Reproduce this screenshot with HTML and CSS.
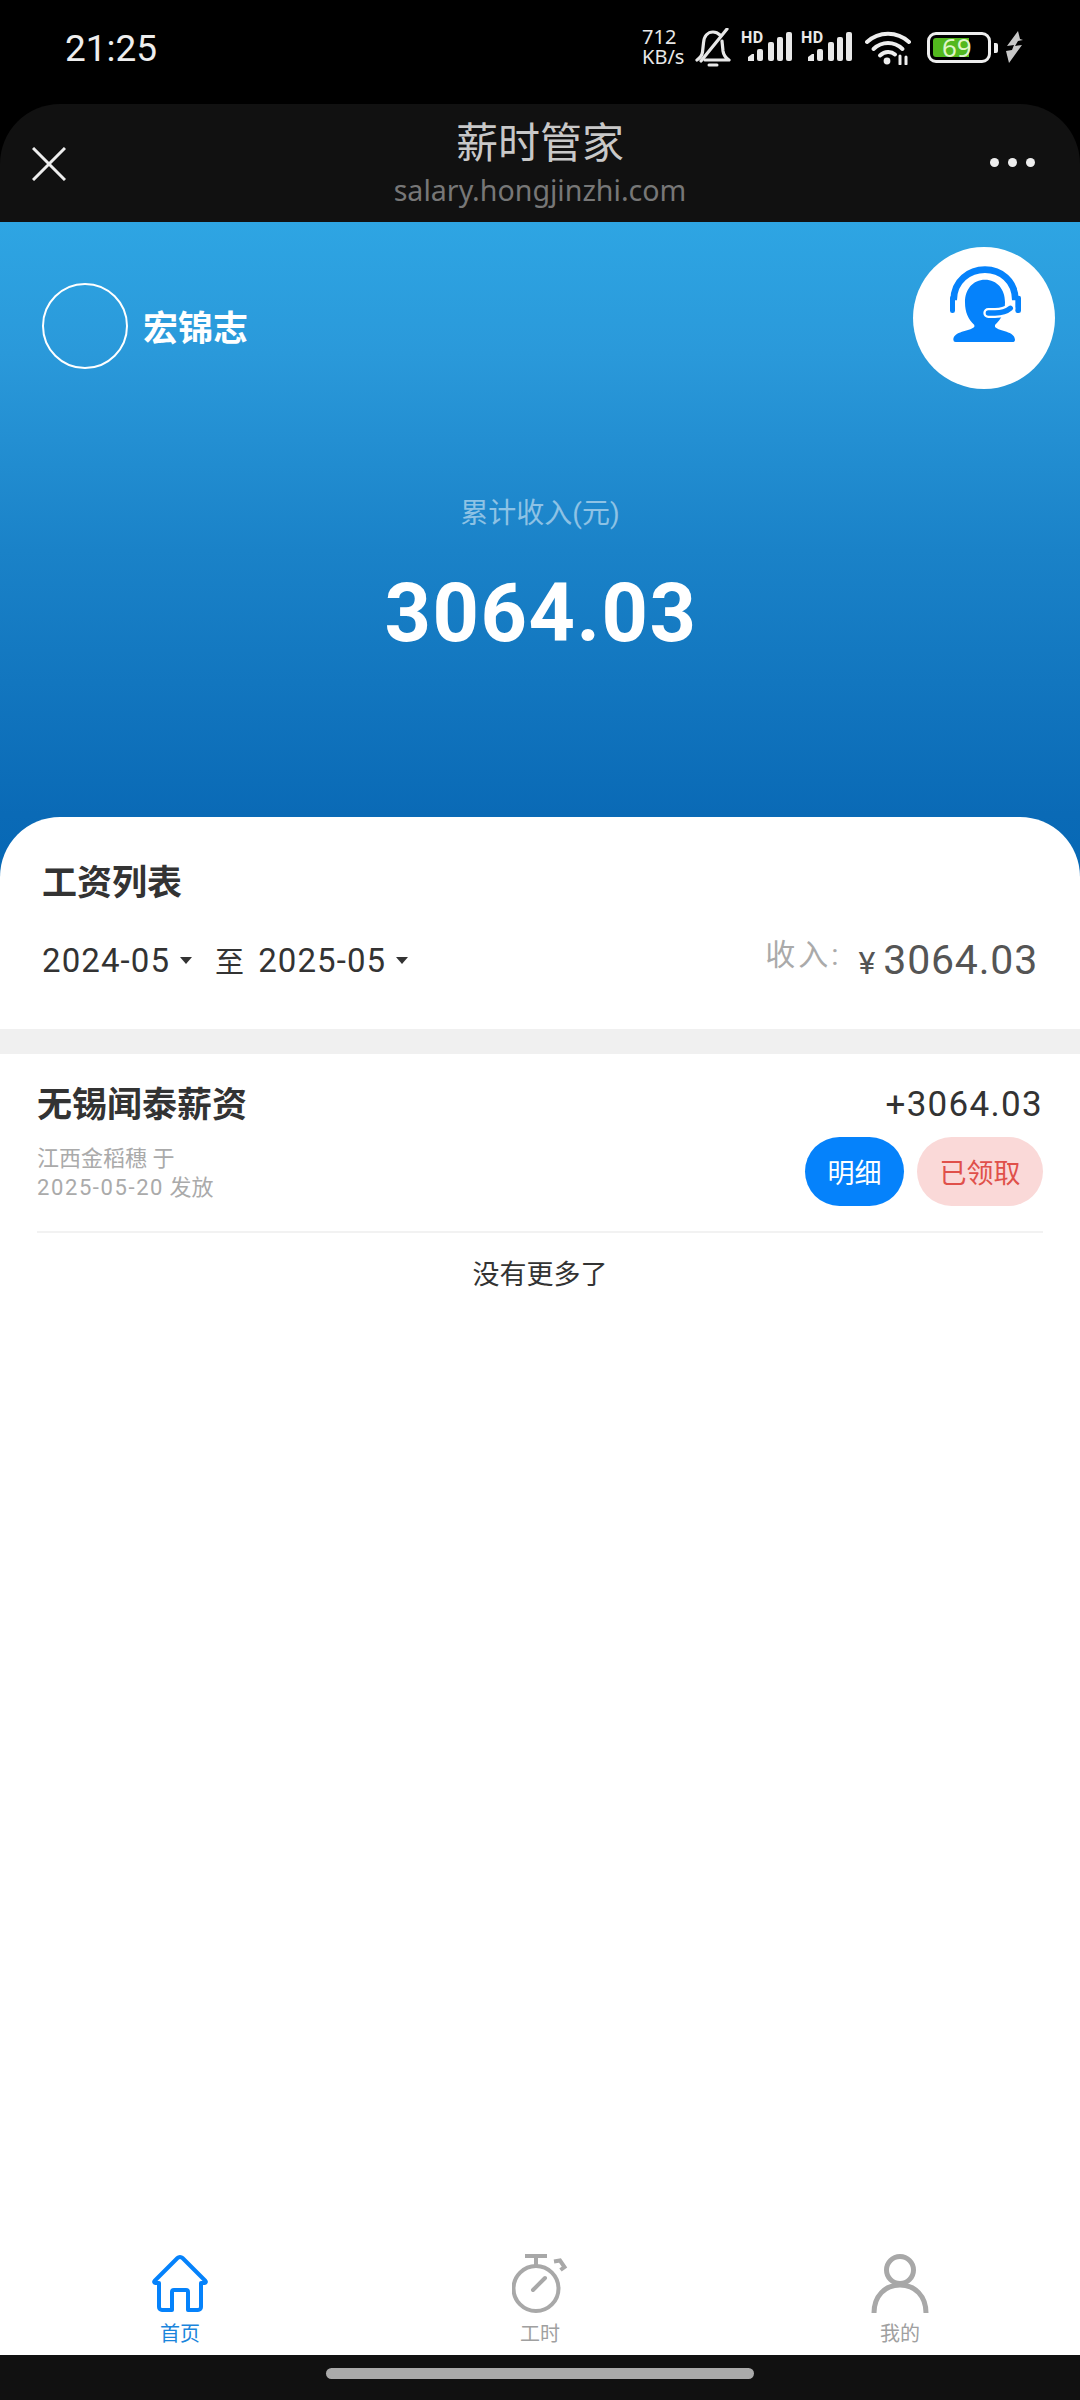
FILE: index.html
```html
<!DOCTYPE html>
<html lang="zh-CN">
<head>
<meta charset="utf-8">
<title>薪时管家</title>
<link rel="stylesheet" href="styles.css">
</head>
<body>
<div class="screen">
  <header class="statusbar">
    <span class="clock">21:25</span>
    <div class="status-icons">
      <span class="speed"><span>712</span><span>KB/s</span></span>
      <svg class="ic-bell" viewBox="0 0 36 40" fill="none" stroke="#e8e8e8" stroke-width="3.2" stroke-linejoin="round" stroke-linecap="round">
        <path d="M2 32c3-2 5-4 5.500-8l1-9C9 8 13 4 18 4c3 0 5 1 7 3M27 13l1 10c.5 4 3 7 6 9H10"/>
        <path d="M32 1 6 33"/>
        <path d="M14 37h8" stroke-width="3"/>
      </svg>
      <div class="signal">
        <span class="hd">HD</span>
        <svg class="signal-bars" viewBox="0 0 51 30" fill="#e8e8e8">
          <path d="M7 30v-4l4-3h2v7z"/>
          <rect x="16" y="18" width="6" height="12" rx="2"/>
          <rect x="27" y="11" width="6" height="19" rx="2"/>
          <rect x="36" y="6" width="6" height="24" rx="2"/>
          <rect x="45" y="1" width="6" height="29" rx="2"/>
        </svg>
      </div>
      <div class="signal">
        <span class="hd">HD</span>
        <svg class="signal-bars" viewBox="0 0 51 30" fill="#e8e8e8">
          <path d="M7 30v-4l4-3h2v7z"/>
          <rect x="16" y="18" width="6" height="12" rx="2"/>
          <rect x="27" y="11" width="6" height="19" rx="2"/>
          <rect x="36" y="6" width="6" height="24" rx="2"/>
          <rect x="45" y="1" width="6" height="29" rx="2"/>
        </svg>
      </div>
      <svg class="ic-wifi" viewBox="0 0 46 34" fill="none" stroke="#eee" stroke-width="4" stroke-linecap="round">
        <path d="M2 11C14 0 32 0 44 11"/>
        <path d="M8.500 18C17 10 29 10 37.500 18"/>
        <path d="M15 24.500c5-4.500 11-4.500 15-1"/>
        <circle cx="22" cy="30" r="3.400" fill="#eee" stroke="none"/>
        <path d="M35 33v-8M41 26v7" stroke-width="3"/>
      </svg>
      <div class="battery">
        <div class="battery-shell">
          <div class="battery-fill"></div>
          <span class="battery-num">69</span>
        </div>
        <i class="battery-cap"></i>
      </div>
      <svg class="ic-bolt" viewBox="0 0 18 32"><path fill="#c8c8c8" d="M13 0 2 15l7-1-2 5-6 1 3 12L17 14l-7 1 3-5 5-1-3-1z"/></svg>
    </div>
  </header>

  <div class="titlebar">
    <svg class="ic-close" viewBox="0 0 34 34" stroke="#eee" stroke-width="3" fill="none"><path d="M1 1l32 32M33 1 1 33"/></svg>
    <div class="title-center">
      <div class="title-main">薪时管家</div>
      <div class="title-url">salary.hongjinzhi.com</div>
    </div>
    <div class="title-more"><i></i><i></i><i></i></div>
  </div>

  <section class="hero">
    <div class="profile">
      <div class="avatar"></div>
      <span class="username">宏锦志</span>
    </div>
    <div class="support">
      <svg viewBox="0 0 426 426" class="support-svg">
        <path fill="none" stroke="#0582fb" stroke-width="20" d="M122 160C122 100 170 68 216 68s91 32 91 92"/>
        <rect x="111" y="146" width="15" height="52" rx="7" fill="#0582fb"/>
        <rect x="307" y="146" width="17" height="52" rx="7" fill="#0582fb"/>
        <path fill="#0582fb" d="M216 98c-36 0-60 28-60 68 0 30 10 52 28 68v6c-16 14-62 12-63 38q0 7 7 7h170q8 0 8-7c-1-26-46-24-60-38v-6c18-16 30-38 30-68 0-40-24-68-60-68z"/>
        <path fill="none" stroke="#fff" stroke-width="30" stroke-linecap="round" d="M226 198h20q30 0 46-14"/>
        <path fill="none" stroke="#0582fb" stroke-width="16" stroke-linecap="round" d="M226 198h20q30 0 46-14"/>
      </svg>
    </div>
    <div class="total-label">累计收入(元)</div>
    <div class="total-value">3064.03</div>
  </section>

  <main class="sheet">
    <section class="filter">
      <h2 class="filter-title">工资列表</h2>
      <div class="filter-row">
        <div class="dates">
          <span class="date">2024-05</span><i class="caret"></i>
          <span class="to">至</span>
          <span class="date">2025-05</span><i class="caret"></i>
        </div>
        <div class="income">
          <span class="income-label">收入:</span>
          <span class="income-yen">¥</span>
          <span class="income-value">3064.03</span>
        </div>
      </div>
    </section>
    <div class="band"></div>
    <section class="list">
      <article class="item">
        <div class="item-top">
          <span class="item-name">无锡闻泰薪资</span>
          <span class="item-amount">+3064.03</span>
        </div>
        <div class="item-bottom">
          <div class="item-meta">
            <div>江西金稻穗 于</div>
            <div><span class="meta-date">2025-05-20</span> 发放</div>
          </div>
          <div class="item-actions">
            <span class="btn btn-detail">明细</span>
            <span class="btn btn-taken">已领取</span>
          </div>
        </div>
      </article>
      <div class="nomore">没有更多了</div>
    </section>
  </main>

  <nav class="tabbar">
    <div class="tab tab-active">
      <svg class="tab-ic" viewBox="0 0 56 59" fill="none" stroke="#0582fb" stroke-width="4" stroke-linejoin="round">
        <path d="M7 29H3.500a1.200 1.200 0 0 1-1-2L25.500 4a3.500 3.500 0 0 1 5 0L53.500 27a1.200 1.200 0 0 1-1 2H49V53a3 3 0 0 1-3 3H36V38a2 2 0 0 0-2-2H22a2 2 0 0 0-2 2V56H10a3 3 0 0 1-3-3Z"/>
      </svg>
      <span class="tab-label">首页</span>
    </div>
    <div class="tab">
      <svg class="tab-ic" viewBox="0 0 56 59" fill="none" stroke="#a8a8a8" stroke-width="4">
        <circle cx="24" cy="34.500" r="22.500"/>
        <path d="M13 2h22M24 4v8"/>
        <path d="M21 36 33 24" stroke-linecap="round"/>
        <path d="M42 7.500l6-1 4.500 6.500-4 3"/>
      </svg>
      <span class="tab-label">工时</span>
    </div>
    <div class="tab">
      <svg class="tab-ic tab-ic-wide" viewBox="0 0 58 59" fill="none" stroke="#a8a8a8" stroke-width="5">
        <circle cx="29" cy="16" r="13.500"/>
        <path d="M3 59C3 42 14 31 29 31s26 11 26 28"/>
      </svg>
      <span class="tab-label">我的</span>
    </div>
  </nav>
  <div class="homebar"><i></i></div>
</div>
</body>
</html>
```

FILE: styles.css
```css
* { box-sizing: border-box; }
html, body { margin: 0; padding: 0; background: #fff; }
body { font-family: Roboto, "Noto Sans CJK SC", sans-serif; color: #333; }
i { display: block; font-style: normal; }

.screen { width: 1080px; height: 2400px; display: flex; flex-direction: column; overflow: hidden; background: #000; }

/* status bar */
.statusbar { height: 104px; flex: none; display: flex; align-items: flex-start; justify-content: space-between; padding: 0 57px 0 65px; color: #eee; }
.clock { font-size: 37px; line-height: 42px; margin-top: 28px; }
.status-icons { display: flex; align-items: flex-start; margin-top: 28px; }
.speed { display: flex; flex-direction: column; font-size: 20px; line-height: 20px; width: 42px; margin-top: -1px; color: #e8e8e8; font-family: "Noto Sans", sans-serif; }
.ic-bell { width: 36px; height: 40px; margin-left: 11px; }
.signal { position: relative; width: 51px; height: 30px; margin: 3px 0 0 10px; }
.signal + .signal { margin-left: 9px; }
.signal-bars { display: block; width: 51px; height: 30px; }
.hd { position: absolute; left: 0; top: 0; font-size: 16px; line-height: 14px; font-weight: 700; letter-spacing: .5px; color: #e8e8e8; }
.ic-wifi { width: 46px; height: 34px; margin-left: 13px; margin-top: 3px; }
.battery { display: flex; align-items: center; margin-left: 16px; margin-top: 4px; }
.battery-shell { position: relative; width: 64px; height: 31px; border: 3px solid #eee; border-radius: 9px; padding: 3px; }
.battery-fill { width: 36px; height: 100%; background: #52b81e; border-radius: 3px 0 0 3px; }
.battery-num { position: absolute; left: 12px; top: -1px; font-size: 26px; line-height: 27px; color: #dff5c8; font-family: "Noto Sans", sans-serif; }
.battery-cap { width: 4px; height: 10px; background: #eee; margin-left: 3px; border-radius: 0 2px 2px 0; }
.ic-bolt { width: 18px; height: 32px; margin-left: 7px; margin-top: 3px; }

/* title bar */
.titlebar { height: 118px; flex: none; background: #111; border-radius: 60px 60px 0 0; display: grid; grid-template-columns: 1fr auto 1fr; align-items: center; padding: 0 45px; }
.ic-close { width: 34px; height: 34px; margin: 1px 0 0 -13px; }
.title-center { text-align: center; }
.title-main { font-size: 42px; line-height: 56px; color: #c8c8c8; margin-top: -3px; }
.title-url { font-size: 28.600px; line-height: 36px; color: #777; font-family: "Noto Sans", sans-serif; }
.title-more { display: flex; gap: 9px; justify-content: flex-end; margin-top: -1px; }
.title-more i { width: 9px; height: 9px; border-radius: 50%; background: #eee; }

/* hero */
.hero { height: 658px; flex: none; position: relative; background: linear-gradient(180deg, #2ea5e3 0%, #2a99da 20%, #1a82c8 50%, #0a6ab6 90%, #0668b5 100%); padding: 61px 42px 0; }
.profile { display: flex; align-items: center; gap: 15px; }
.avatar { width: 86px; height: 86px; border-radius: 50%; border: 2px solid #fff; }
.username { font-size: 35px; line-height: 46px; margin-top: 7px; font-weight: 700; color: #fff; }
.support { position: absolute; right: 25px; top: 25px; width: 142px; height: 142px; border-radius: 50%; background: #fff; }
.support-svg { display: block; width: 142px; height: 142px; }
.total-label { margin-top: 126px; text-align: center; font-size: 28px; line-height: 38px; color: rgba(255,255,255,.5); }
.total-value { margin-top: 31px; padding-left: 2px; text-align: center; font-size: 81px; line-height: 100px; font-weight: 700; color: #fff; letter-spacing: 1.500px; }

/* sheet */
.sheet { flex: 1; background: #fff; border-radius: 60px 60px 0 0; margin-top: -63px; position: relative; display: flex; flex-direction: column; }
.filter { height: 212px; flex: none; padding: 42px 42px 0; }
.filter-title { margin: 0; font-size: 35px; line-height: 50px; font-weight: 700; color: #333; }
.filter-row { display: flex; justify-content: space-between; align-items: center; margin-top: 26px; height: 50px; }
.dates { display: flex; align-items: center; font-size: 33px; color: #333; }
.date { letter-spacing: 1.100px; }
.caret { width: 0; height: 0; border-left: 6px solid transparent; border-right: 6px solid transparent; border-top: 7px solid #333; margin-left: 10px; }
.to { font-size: 29px; margin: 0 14px 0 23px; }
.income { display: flex; align-items: baseline; }
.income-label { font-size: 30px; letter-spacing: 3px; color: #aaa; position: relative; top: -9px; }
.income-yen { font-size: 32px; color: #555; margin-left: 17px; }
.income-value { font-size: 41px; color: #555; margin-left: 8px; letter-spacing: .800px; }
.band { height: 25px; flex: none; background: #f0f0f0; }
.list { padding: 0 37px; }
.item { height: 179px; border-bottom: 2px solid #f2f2f2; }
.item-top { display: flex; justify-content: space-between; align-items: center; padding-top: 23px; height: 71px; }
.item-name { font-size: 35px; line-height: 48px; margin-top: 9px; font-weight: 700; color: #333; }
.item-amount { font-size: 35px; line-height: 48px; margin-top: 8px; color: #333; letter-spacing: 1.300px; }
.item-bottom { display: flex; justify-content: space-between; align-items: flex-start; margin-top: 12px; }
.item-meta { font-size: 22px; line-height: 29px; color: #aaa; padding-top: 7px; }
.meta-date { letter-spacing: 1.600px; }
.item-actions { display: flex; gap: 13px; }
.btn { height: 69px; display: flex; align-items: center; justify-content: center; border-radius: 35px; font-size: 27px; }
.btn-detail { width: 99px; background: #0582fb; color: #fff; }
.btn-taken { width: 126px; background: #fad9d8; color: #e0504a; }
.nomore { height: 85px; text-align: center; font-size: 27px; line-height: 85px; color: #333; }

/* tab bar */
.tabbar { flex: none; height: 126px; display: grid; grid-template-columns: repeat(3, 360px); background: #fff; }
.tab { display: flex; flex-direction: column; align-items: center; padding-top: 25px; }
.tab-ic { width: 56px; height: 59px; }
.tab-ic-wide { width: 58px; }
.tab-label { font-size: 20px; line-height: 28px; margin-top: 7px; color: #a0a0a0; }
.tab-active .tab-label { color: #1a85dc; }
.homebar { flex: none; height: 45px; background: #111; display: flex; justify-content: center; padding-top: 13px; }
.homebar i { width: 428px; height: 11px; border-radius: 6px; background: #aaa; }
```
